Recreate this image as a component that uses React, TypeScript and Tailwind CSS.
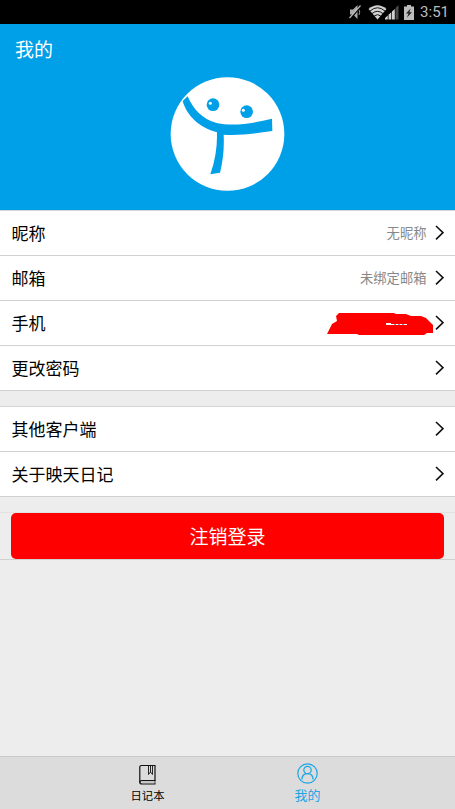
const ChevronIcon = () => (
  <svg width="9" height="15" viewBox="0 0 9 15" fill="none" stroke="#111" strokeWidth="1.6">
    <path d="M1 1 L8 7.700 L1 14.400" />
  </svg>
);

const Avatar = () => (
  <svg width="115" height="115" viewBox="30 21 345 345">
    <circle cx="202.500" cy="192" r="170.500" fill="#fff" />
    <g fill="#00a0e9">
      <path d="M83 79 C97 114 127 149 170 159 C222 170 278 160 336 146 L337 183 C282 191 236 197 191 194 C193 235 189 273 180 308 L151 313 C166 271 172 229 171 187 C119 173 80 137 68 93 Z" />
      <circle cx="159" cy="104" r="19" />
      <circle cx="260" cy="125" r="19" />
    </g>
    <circle cx="151" cy="100" r="4.500" fill="#fff" />
    <circle cx="250" cy="121" r="4.500" fill="#fff" />
  </svg>
);

const MutedIcon = () => (
  <svg width="14" height="16" viewBox="0 0 14 16">
    <path d="M2 5.500 H5 L9.500 1 V15 L5 10.500 H2 Z" fill="#aaa" />
    <path d="M11 5.500 Q12.500 8 11 11" fill="none" stroke="#999" />
    <path d="M13 2.200 L2.500 14.800" stroke="#000" strokeWidth="1.500" />
    <path d="M12.500 1.500 L1.500 14" stroke="#bbb" strokeWidth="1.200" />
  </svg>
);

const WifiIcon = () => (
  <svg width="19" height="15" viewBox="0 0 19 15">
    <path d="M9.500 14.500 L0.500 4 Q9.500 -3.500 18.500 4 Z" fill="#d0d0d0" />
    <g fill="none" stroke="#000" strokeWidth="0.900">
      <path d="M2 6 Q9.500 -0.500 17 6" />
      <path d="M4 8.600 Q9.500 4 15 8.600" />
      <path d="M6.200 11 Q9.500 8.300 12.800 11" />
    </g>
  </svg>
);

const SignalIcon = () => (
  <svg width="14" height="15" viewBox="0 0 14 15">
    <path d="M0 14.500 V13 L2.800 10.500 V14.500 Z M3.500 14.500 V9.800 L6.300 7.300 V14.500 Z M7 14.500 V6.500 L9.800 4 V14.500 Z" fill="#d0d0d0" />
    <path d="M10.500 14.500 V3 L13.500 0 V14.500 Z" fill="#4a4a4a" />
  </svg>
);

const BatteryIcon = () => (
  <svg width="10" height="15" viewBox="0 0 10 15">
    <path d="M3 0 H7 V1.500 H10 V15 H0 V1.500 H3 Z" fill="#bdbdbd" />
    <path d="M6.500 3.500 L2 8.500 H4.500 L3 12.500 L8 7.300 H5.500 Z" fill="#222" />
  </svg>
);

const DiaryIcon = () => (
  <svg width="18" height="21" viewBox="0 0 18 21" fill="none" stroke="#111" strokeWidth="1.200">
    <path d="M16 16.500 V1.500 H2.500 Q0.800 1.500 0.800 3 V18 Q0.800 20 3 20 H16.500" />
    <path d="M16.500 16.500 H3 Q0.800 16.500 0.800 18.500" />
    <path d="M3 18 H16" stroke="#999" strokeWidth="0.600" />
    <path d="M16 16.500 V20" strokeWidth="0.700" />
    <path d="M9.500 1.500 V10.500 L11.500 8 L13.500 10.500 V1.500 M11.500 2 V8" strokeWidth="0.900" />
  </svg>
);

const ProfileIcon = () => (
  <svg width="21" height="21" viewBox="0 0 21 21" fill="none" stroke="#1da5e5" strokeWidth="1.200">
    <circle cx="10.500" cy="10.500" r="9.700" />
    <circle cx="10.500" cy="7" r="3.700" />
    <path d="M5 16.500 C5 12.500 7.300 10.700 10.500 10.700 C13.700 10.700 16 12.500 16 16.500" />
  </svg>
);

// Scribble that hides the phone number
const HiddenPhone = () => (
  <svg width="107" height="23" viewBox="0 0 107 23" className="relative top-[2px] -mr-[7px]">
    <path d="M0 21 L5 11 L10 8 L9 3 L12 0 H67 L69 1 H79 L84 3 H94 L99 5 L106 12 V20 H100 L97 22 H32 L30 21 Z" fill="#f00" />
    <path d="M59 10 H64 V11 H80 V12 H59 Z" fill="#fff" />
    <path d="M67 11.500 H77" stroke="#999" strokeDasharray="2 2" />
  </svg>
);

const accountRows = [
  { label: "昵称", value: "无昵称" },
  { label: "邮箱", value: "未绑定邮箱" },
  { label: "手机", value: <HiddenPhone /> },
  { label: "更改密码" },
];

const moreRows = [{ label: "其他客户端" }, { label: "关于映天日记" }];

type Row = { label: string; value?: React.ReactNode };

function RowGroup({ rows }: { rows: Row[] }) {
  return (
    <ul className="border-t border-[#d5d5d5]">
      {rows.map((row) => (
        <li key={row.label} className="flex h-[45px] items-center border-b border-[#d0d0d0] bg-white pb-px pl-[11.5px] pr-[11px]">
          <span className="grow text-[17px] text-black">{row.label}</span>
          <span className="mr-[8.5px] text-[13.3px] text-[#888]">{row.value}</span>
          <ChevronIcon />
        </li>
      ))}
    </ul>
  );
}

export default function App() {
  return (
    <div className="flex h-[809px] w-[455px] flex-col overflow-hidden bg-[#ededed] font-['Noto_Sans_CJK_SC',sans-serif]">
      <div className="flex h-6 shrink-0 items-center justify-end bg-black pr-[6px]">
        <MutedIcon />
        <div className="ml-[6px] flex">
          <WifiIcon />
          <div className="-ml-[2px]">
            <SignalIcon />
          </div>
        </div>
        <div className="ml-[5px]">
          <BatteryIcon />
        </div>
        <span className="ml-[6px] font-[Roboto,sans-serif] text-[15px] text-[#bcbcbc]">3:51</span>
      </div>

      <header className="flex h-[186px] shrink-0 flex-col bg-[#00a0e9]">
        <h1 className="h-[53px] pl-[15px] pt-[11px] text-[19px] leading-7 text-white">我的</h1>
        <div className="flex justify-center">
          <Avatar />
        </div>
      </header>

      <main className="flex grow flex-col gap-[15px]">
        <RowGroup rows={accountRows} />
        <RowGroup rows={moreRows} />
        <div className="h-12 border-y border-t-[#e2e2e2] border-b-[#d0d0d0] px-[11px]">
          <button className="h-[46px] w-full rounded-[5px] bg-[#f00] text-[19px] text-white">注销登录</button>
        </div>
      </main>

      <nav className="flex h-[53px] shrink-0 justify-center border-t border-[#c8c8c8] bg-[#dcdcdc]">
        <div className="flex w-40 flex-col items-center pt-[7px]">
          <DiaryIcon />
          <span className="mt-[2px] text-[11.3px] leading-4 text-black">日记本</span>
        </div>
        <div className="flex w-40 flex-col items-center pt-[6px]">
          <ProfileIcon />
          <span className="mt-[3px] text-[13px] leading-4 text-[#1da5e5]">我的</span>
        </div>
      </nav>
    </div>
  );
}
